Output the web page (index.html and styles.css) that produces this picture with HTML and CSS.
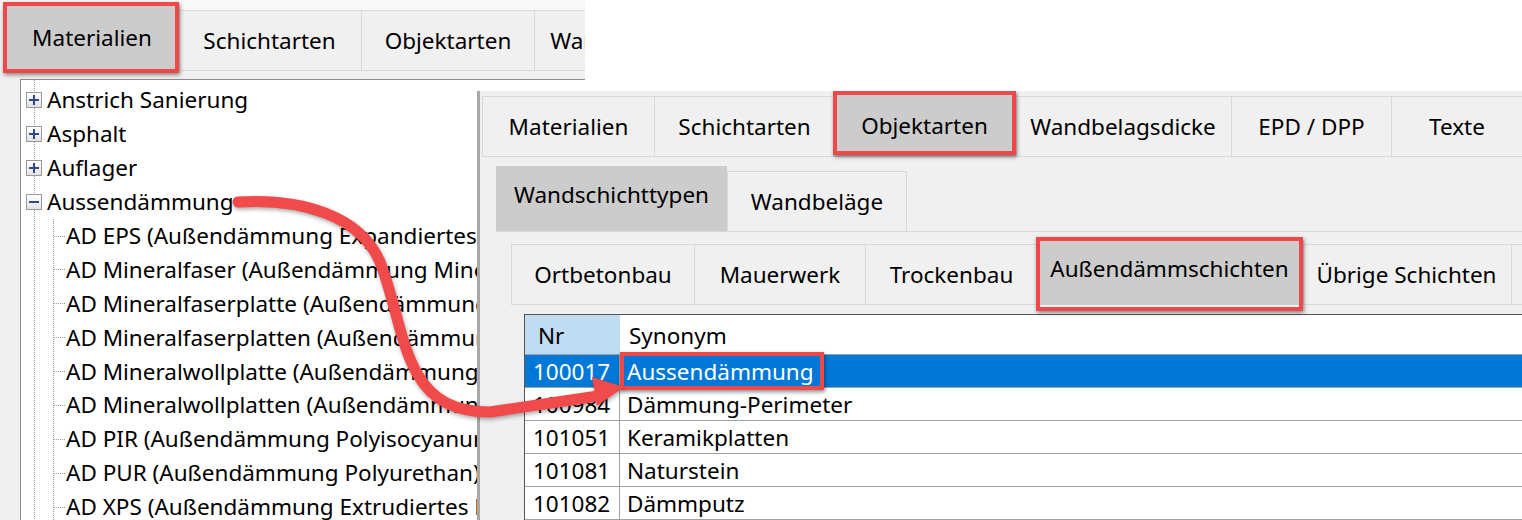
FILE: index.html
```html
<!DOCTYPE html>
<html lang="de">
<head>
<meta charset="utf-8">
<title>Materialien / Objektarten</title>
<link rel="stylesheet" href="styles.css">
</head>
<body>
<div class="canvas">

  <section class="win win-left">
    <nav class="tabs tabs-left">
      <div class="tab sel hl hl-mat">Materialien</div>
      <div class="tab">Schichtarten</div>
      <div class="tab">Objektarten</div>
      <div class="tab">Wandbelagsdicke</div>
    </nav>
    <div class="tree-wrap">
      <div class="tree">
        <div class="node"><span class="exp plus"></span><span class="label">Anstrich Sanierung</span></div>
        <div class="node"><span class="exp plus"></span><span class="label">Asphalt</span></div>
        <div class="node"><span class="exp plus"></span><span class="label">Auflager</span></div>
        <div class="node"><span class="exp minus"></span><span class="label">Aussendämmung</span></div>
        <div class="children">
          <div class="leaf"><span class="label">AD EPS (Außendämmung Expandiertes Polystyrol)</span></div>
          <div class="leaf"><span class="label">AD Mineralfaser (Außendämmung Mineralfaser)</span></div>
          <div class="leaf"><span class="label">AD Mineralfaserplatte (Außendämmung Mineralfaserplatte)</span></div>
          <div class="leaf"><span class="label">AD Mineralfaserplatten (Außendämmung Mineralfaserplatten)</span></div>
          <div class="leaf"><span class="label">AD Mineralwollplatte (Außendämmung Mineralwollplatte)</span></div>
          <div class="leaf"><span class="label">AD Mineralwollplatten (Außendämmung Mineralwollplatten)</span></div>
          <div class="leaf"><span class="label">AD PIR (Außendämmung Polyisocyanurat)</span></div>
          <div class="leaf"><span class="label">AD PUR (Außendämmung Polyurethan)</span></div>
          <div class="leaf"><span class="label">AD XPS (Außendämmung Extrudiertes Polystyrol)</span></div>
        </div>
      </div>
    </div>
  </section>

  <section class="win win-right">
    <nav class="tabs tabs-main">
      <div class="tab">Materialien</div>
      <div class="tab">Schichtarten</div>
      <div class="tab sel hl hl-obj">Objektarten</div>
      <div class="tab">Wandbelagsdicke</div>
      <div class="tab">EPD / DPP</div>
      <div class="tab">Texte</div>
    </nav>
    <nav class="subtabs">
      <div class="subtab sel">Wandschichttypen</div>
      <div class="subtab">Wandbeläge</div>
    </nav>
    <nav class="tabs tabs-sub">
      <div class="tab">Ortbetonbau</div>
      <div class="tab">Mauerwerk</div>
      <div class="tab">Trockenbau</div>
      <div class="tab sel hl hl-ad">Außendämmschichten</div>
      <div class="tab">Übrige Schichten</div>
    </nav>
    <div class="grid">
      <div class="row head">
        <div class="cell nr">Nr</div>
        <div class="cell syn">Synonym</div>
      </div>
      <div class="row sel">
        <div class="cell nr">100017</div>
        <div class="cell syn"><span class="mark hl">Aussendämmung</span></div>
      </div>
      <div class="row">
        <div class="cell nr">100984</div>
        <div class="cell syn">Dämmung-Perimeter</div>
      </div>
      <div class="row">
        <div class="cell nr">101051</div>
        <div class="cell syn">Keramikplatten</div>
      </div>
      <div class="row">
        <div class="cell nr">101081</div>
        <div class="cell syn">Naturstein</div>
      </div>
      <div class="row">
        <div class="cell nr">101082</div>
        <div class="cell syn">Dämmputz</div>
      </div>
    </div>
  </section>

  <svg class="arrow" width="1522" height="520" viewBox="0 0 1522 520" aria-hidden="true">
    <g class="arrow-g">
      <path d="M238 202 C300 198 360 215 380 262 C395 300 400 345 418 375 C432 400 455 412 490 412 L598 396" fill="none" stroke="#f14a4a" stroke-width="11" stroke-linecap="round" stroke-linejoin="round"/>
      <polygon points="624,387 592,377 597,406" fill="#f14a4a"/>
    </g>
  </svg>

</div>
</body>
</html>
```

FILE: styles.css
```css
* { box-sizing: border-box; }

html, body { margin: 0; padding: 0; }

body {
  width: 1522px;
  height: 520px;
  overflow: hidden;
  background: #ffffff;
  font-family: "Noto Sans", "Open Sans", "DejaVu Sans", sans-serif;
  font-size: 22.5px;
  color: #000000;
}

.canvas {
  position: relative;
  width: 1522px;
  height: 520px;
  overflow: hidden;
}

/* ---------- windows (screenshots placed on a free canvas) ---------- */
.win {
  position: absolute;
  display: flex;
  flex-direction: column;
  overflow: hidden;
}

.win-left {
  left: 0;
  top: 0;
  width: 585px;
  height: 520px;
  background: linear-gradient(#f8f8f8 0 10px, #f0f0f0 10px);
}

.win-right {
  left: 477px;
  top: 91px;
  right: 0;
  bottom: 0;
  background: #f0f0f0;
  border-left: 3px solid #a8a8a8;
  padding: 5px 0 0 2px;
}

/* ---------- tab strips ---------- */
.tabs {
  display: grid;
  flex: none;
  height: 61px;
  border-top: 1px solid #d9d9d9;
  border-bottom: 1px solid #d9d9d9;
}

.tab {
  position: relative;
  display: flex;
  align-items: center;
  justify-content: center;
  white-space: nowrap;
  border-right: 1px solid #d9d9d9;
}

.tab:first-child { border-left: 1px solid #d9d9d9; }

.tab.sel {
  background: #cccccc;
  z-index: 1;
}

.tabs-left {
  margin: 10px 0 0 6px;
  grid-template-columns: 172px 184px 173px 217px;
}
.tabs-left .sel { margin: -7px -2px -1px; }

.tabs-main {
  grid-template-columns: 173px 180px 180px 217px 160px 131px;
}
.tabs-main .sel { margin: -3px -2px -1px; }

.subtabs {
  flex: none;
  display: flex;
  align-items: flex-end;
  height: 66px;
  margin: 9px 0 0 14px;
  border-bottom: 1px solid #d9d9d9;
}

.subtab {
  width: 180px;
  height: 60px;
  display: flex;
  align-items: center;
  justify-content: center;
  white-space: nowrap;
  border: 1px solid #d9d9d9;
  border-bottom: 0;
}

.subtab.sel {
  width: 231px;
  height: 65px;
  border: 0;
  background: #cccccc;
  padding-bottom: 9px;
}

.tabs-sub {
  margin: 12px 0 0 29px;
  grid-template-columns: 184px 171px 172px 264px 210px;
}
.tabs-sub .sel {
  margin: -5px -2px -1px;
  padding-bottom: 8px;
}

/* ---------- red highlight frames ---------- */
.hl { position: relative; }

.hl::after {
  content: "";
  position: absolute;
  border: 4px solid #f04848;
  box-shadow: 1px 2px 4px rgba(0, 0, 0, 0.45);
  pointer-events: none;
  z-index: 2;
}

.hl-mat::after { top: -2px; left: -2px; right: 0; bottom: -2px; }
.hl-obj::after { top: -3px; left: 0; right: 0; bottom: 2px; }
.hl-ad::after  { top: -3px; left: 0; right: 0; bottom: -6px; }
.mark::after   { top: -5px; bottom: -3px; left: -7px; right: -10px; }

/* ---------- tree view ---------- */
.tree-wrap {
  flex: 1;
  display: flex;
  padding: 8px 0 0 20px;
  min-height: 0;
}

.tree {
  flex: 1;
  overflow: hidden;
  padding-top: 3px;
  border-left: 1px solid #8c8c8c;
  border-top: 1px solid #8c8c8c;
  background:
    repeating-linear-gradient(to bottom, #a0a0a0 0 1px, transparent 1px 2px) 13px 0 / 1px 100% no-repeat,
    #ffffff;
}

.node,
.leaf {
  width: 456px;
  height: 33.9px;
  display: flex;
  align-items: center;
  white-space: nowrap;
  overflow: hidden;
}

.label {
  overflow: hidden;
  min-width: 0;
}

.exp {
  position: relative;
  flex: none;
  width: 16px;
  height: 16px;
  margin: 0 5px 0 5px;
  border: 1px solid #999999;
  background: linear-gradient(#ffffff, #e2e2e2);
}

.exp::before,
.exp.plus::after {
  content: "";
  position: absolute;
  background: #30498c;
}

.exp::before { left: 2px; right: 2px; top: 6px; height: 2px; }
.exp.plus::after { top: 2px; bottom: 2px; left: 6px; width: 2px; }

.children {
  background: repeating-linear-gradient(to bottom, #a0a0a0 0 1px, transparent 1px 2px) 32px 0 / 1px 100% no-repeat;
}

.leaf {
  position: relative;
  padding-left: 45px;
}

.leaf::before {
  content: "";
  position: absolute;
  left: 33px;
  width: 11px;
  top: 50%;
  border-top: 1px dotted #a0a0a0;
}

/* ---------- data grid ---------- */
.grid {
  flex: 1;
  margin: 9px 0 0 42px;
  border-left: 1px solid #555555;
  border-top: 1px solid #555555;
  background: #ffffff;
  line-height: 30px;
}

.row {
  display: grid;
  grid-template-columns: 95px 1fr;
  height: 33px;
  border-bottom: 1px solid #a0a0a0;
}

.row.head { height: 40px; }

.cell {
  display: flex;
  align-items: center;
  white-space: nowrap;
  padding: 2px 0 0 8px;
}

.cell.nr { border-right: 1px solid #a0a0a0; }
.cell.syn { padding-left: 7px; }

.head .cell.nr {
  background: #c0dcf3;
  border-right-color: transparent;
  padding-left: 13px;
}
.head .cell.syn { padding-left: 9px; }

.row.sel {
  background: #0078d7;
  color: #ffffff;
}

/* ---------- annotation arrow ---------- */
.arrow {
  position: absolute;
  left: 0;
  top: 0;
  pointer-events: none;
  z-index: 5;
}

.arrow-g { filter: drop-shadow(1px 2px 2px rgba(0, 0, 0, 0.35)); }
```
